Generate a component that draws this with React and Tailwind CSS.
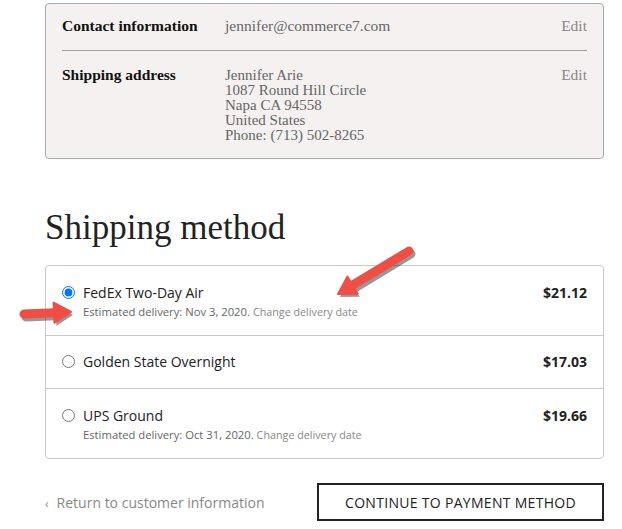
import React from 'react';

const serif = { fontFamily: '"Liberation Serif", Georgia, serif' };
const sans = { fontFamily: '"Open Sans", "Noto Sans", sans-serif' };

const options = [
  { id: 'fedex', name: 'FedEx Two-Day Air', price: '$21.12', eta: 'Nov 3, 2020', checked: true },
  { id: 'gso', name: 'Golden State Overnight', price: '$17.03' },
  { id: 'ups', name: 'UPS Ground', price: '$19.66', eta: 'Oct 31, 2020' },
];

// red annotation arrow with a soft shadow
const Arrow = ({ x1, y1, x2, y2 }) => {
  const ang = Math.atan2(y2 - y1, x2 - x1);
  const len = 17;
  const w = 10;
  const bx = x2 - Math.cos(ang) * len;
  const by = y2 - Math.sin(ang) * len;
  const px = -Math.sin(ang) * w;
  const py = Math.cos(ang) * w;
  const head = `${x2},${y2} ${bx + px},${by + py} ${bx - px},${by - py}`;
  return (
    <g>
      <g transform="translate(2,3)" opacity="0.4">
        <line x1={x1} y1={y1} x2={bx} y2={by} stroke="#000" strokeWidth="9" strokeLinecap="round" />
        <polygon points={head} fill="#000" />
      </g>
      <line x1={x1} y1={y1} x2={bx} y2={by} stroke="#f04e45" strokeWidth="9" strokeLinecap="round" />
      <polygon points={head} fill="#f04e45" strokeLinejoin="round" stroke="#f04e45" strokeWidth="2" />
    </g>
  );
};

export default function App() {
  return (
    <div className="relative w-[622px] h-[529px] bg-white overflow-hidden">
      <div className="pl-[45px] pr-[18px] pt-[3px]">
        {/* review box */}
        <div className="bg-[#f4f1f0] border border-[#a9a9a9] rounded-[4px] px-4 text-[15.5px]" style={serif}>
          <div className="flex items-center h-[47px] border-b border-[#a0a0a0] pb-[2px]">
            <div className="w-[163px] font-bold text-[#111]">Contact information</div>
            <div className="flex-1 text-[#666]">jennifer@commerce7.com</div>
            <div className="text-[#888]">Edit</div>
          </div>
          <div className="flex pt-[15px] pb-[15px]">
            <div className="w-[163px] font-bold text-[#111] leading-[17px]">Shipping address</div>
            <div className="flex-1 text-[#666] text-[15px] leading-[15px] pt-[2px]">
              <div>Jennifer Arie</div>
              <div>1087 Round Hill Circle</div>
              <div>Napa CA 94558</div>
              <div>United States</div>
              <div>Phone: (713) 502-8265</div>
            </div>
            <div className="text-[#888] leading-[17px]">Edit</div>
          </div>
        </div>

        <h2 className="mt-[49px] text-[35px] leading-[40px] text-[#222]" style={serif}>Shipping method</h2>

        {/* shipping options */}
        <div className="mt-[17px] border border-[#c8c8c8] rounded-[4px]" style={sans}>
          {options.map((o, i) => (
            <div
              key={o.id}
              className={`px-4 ${i > 0 ? 'border-t border-[#c8c8c8]' : ''} ${o.eta ? 'pt-[16px] pb-[15px]' : 'pt-[15px] pb-[17px]'}`}
            >
              <div className="flex items-center h-[20px]">
                <input
                  type="radio"
                  name="ship"
                  readOnly
                  checked={!!o.checked}
                  className="w-[13px] h-[13px] m-0 mr-[8px] accent-[#0075ff]"
                />
                <div className="flex-1 text-[14px] text-[#222]">{o.name}</div>
                <div className="text-[14px] font-bold text-[#222]">{o.price}</div>
              </div>
              {o.eta && (
                <div className="pl-[21px] mt-[2px] text-[11.25px] leading-[16px] text-[#666]">
                  Estimated delivery: {o.eta}. <span className="text-[10.75px] text-[#888]">Change delivery date</span>
                </div>
              )}
            </div>
          ))}
        </div>

        {/* footer */}
        <div className="mt-[24px] flex items-center justify-between" style={sans}>
          <div className="text-[14px] text-[#888]">
            <span className="mr-[8px] text-[12px]">‹</span>Return to customer information
          </div>
          <button className="w-[287px] h-[38px] border-2 border-[#222] text-[14px] text-[#222] tracking-[0.3px]">
            CONTINUE TO PAYMENT METHOD
          </button>
        </div>
      </div>

      {/* annotations */}
      <svg className="absolute inset-0 pointer-events-none" width="622" height="529">
        <Arrow x1={409} y1={251} x2={338} y2={294} />
        <Arrow x1={24} y1={314} x2={71} y2={312} />
      </svg>
    </div>
  );
}
